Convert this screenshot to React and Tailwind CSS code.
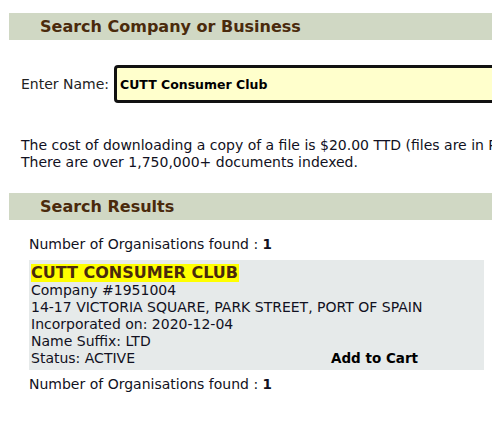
import React from 'react';

function SectionBar({ title }) {
    return (
        <div className="ml-[9px] w-[700px] h-[27px] bg-[#d0d8c4] flex items-center pl-[31px]">
            <h2 className="text-[16px] font-bold text-[#4a2a0c] leading-none">{title}</h2>
        </div>
    );
}

export default function App() {
    const empresa = {
        nome: 'CUTT CONSUMER CLUB',
        numero: '1951004',
        morada: '14-17 VICTORIA SQUARE, PARK STREET, PORT OF SPAIN',
        incorporada: '2020-12-04',
        sufixo: 'LTD',
        estado: 'ACTIVE',
    };

    return (
        <div className="w-[492px] h-[433px] overflow-hidden bg-white text-[14px] text-[#111122] font-['DejaVu_Sans','Verdana',sans-serif]">
            <div className="w-[800px] pt-[13px]">
                {/* Cabeçalho da pesquisa */}
                <SectionBar title="Search Company or Business" />

                <div className="flex items-center mt-[25px] pl-[21px]">
                    <label className="w-[93px] text-[#222]">Enter Name:</label>
                    <input
                        className="w-[500px] h-[38px] bg-[#ffffcc] border-[3px] border-[#111] rounded-[4px] px-[3px] font-bold text-[12.5px] text-black outline-none"
                        defaultValue="CUTT Consumer Club"
                    />
                </div>

                <p className="mt-[34px] pl-[21px] leading-[17px] whitespace-nowrap">
                    The cost of downloading a copy of a file is $20.00 TTD (files are in PDF format).
                    <br />
                    There are over 1,750,000+ documents indexed.
                </p>

                <div className="mt-[22px]">
                    <SectionBar title="Search Results" />
                </div>

                {/* Resultados */}
                <div className="pl-[29px] w-[484px]">
                    <div className="mt-[16px] leading-[17px]">
                        Number of Organisations found : <b className="text-[13.5px]">1</b>
                    </div>
                    <div className="mt-[7px] bg-[#e6eaea] w-[455px] pt-[4px] pb-[3px] pl-[2px] leading-[17px]">
                        <span className="bg-[#ffff00] text-[#4a2a0c] font-bold text-[16px] leading-[18px] inline-block align-top pr-[1px]">
                            {empresa.nome}
                        </span>
                        <div>Company #{empresa.numero}</div>
                        <div>{empresa.morada}</div>
                        <div>Incorporated on: {empresa.incorporada}</div>
                        <div>Name Suffix: {empresa.sufixo}</div>
                        <div className="flex">
                            <span className="w-[300px]">Status: {empresa.estado}</span>
                            <a className="font-bold text-[13.5px] text-black cursor-pointer">Add to Cart</a>
                        </div>
                    </div>
                    <div className="mt-[6px] leading-[17px]">
                        Number of Organisations found : <b className="text-[13.5px]">1</b>
                    </div>
                </div>
            </div>
        </div>
    );
}
